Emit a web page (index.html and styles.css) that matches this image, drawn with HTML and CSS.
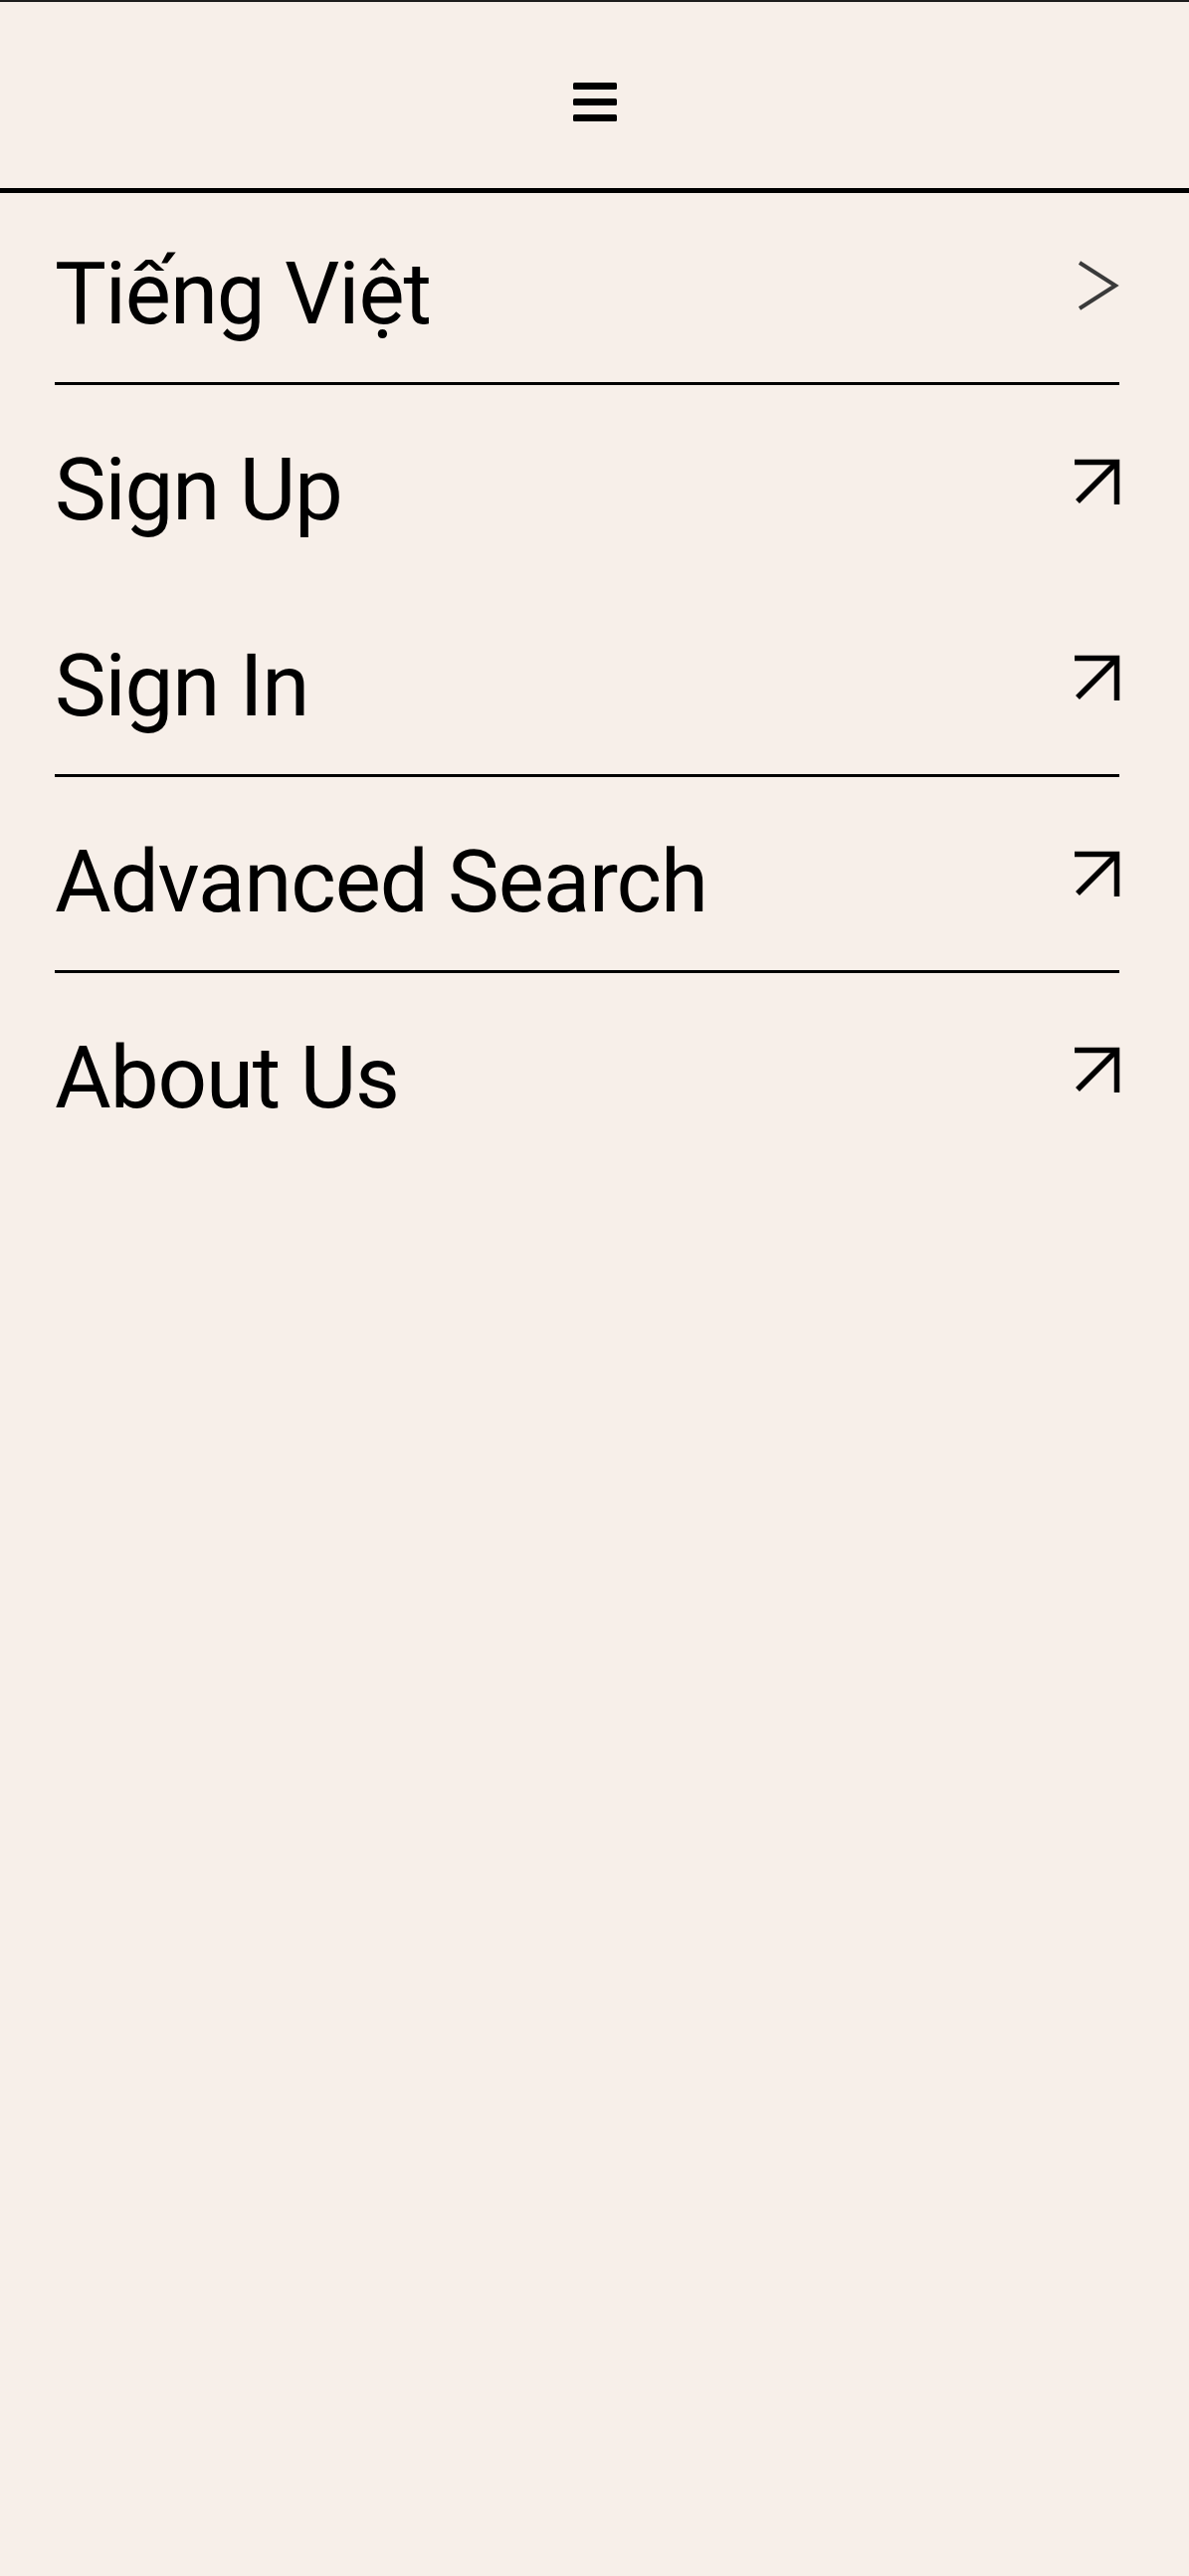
FILE: index.html
```html
<!DOCTYPE html>
<html lang="en">
<head>
<meta charset="utf-8">
<title>Menu</title>
<link rel="stylesheet" href="styles.css">
</head>
<body>
<header class="topbar">
  <button class="menu-toggle" aria-label="Close menu">
    <svg class="burger" width="44" height="39" viewBox="0 0 44 39" aria-hidden="true">
      <rect x="0" y="0" width="44" height="7" rx="1.5"/>
      <rect x="0" y="16" width="44" height="7" rx="1.5"/>
      <rect x="0" y="32" width="44" height="7" rx="1.5"/>
    </svg>
  </button>
</header>
<nav class="menu">
  <a class="item item-first item-ruled" href="#">
    <span class="label">Tiếng Việt</span>
    <svg class="chevron" width="42" height="50" viewBox="0 0 42 50" aria-hidden="true">
      <polyline points="2,2 38,25 2,48"/>
    </svg>
  </a>
  <a class="item" href="#">
    <span class="label">Sign Up</span>
    <svg class="arrow" width="45" height="45" viewBox="0 0 45 45" aria-hidden="true">
      <polyline points="0,2.5 42.5,2.5 42.5,45"/>
      <line x1="42.5" y1="2.5" x2="3" y2="42"/>
    </svg>
  </a>
  <a class="item item-ruled" href="#">
    <span class="label">Sign In</span>
    <svg class="arrow" width="45" height="45" viewBox="0 0 45 45" aria-hidden="true">
      <polyline points="0,2.5 42.5,2.5 42.5,45"/>
      <line x1="42.5" y1="2.5" x2="3" y2="42"/>
    </svg>
  </a>
  <a class="item item-ruled" href="#">
    <span class="label">Advanced Search</span>
    <svg class="arrow" width="45" height="45" viewBox="0 0 45 45" aria-hidden="true">
      <polyline points="0,2.5 42.5,2.5 42.5,45"/>
      <line x1="42.5" y1="2.5" x2="3" y2="42"/>
    </svg>
  </a>
  <a class="item" href="#">
    <span class="label">About Us</span>
    <svg class="arrow" width="45" height="45" viewBox="0 0 45 45" aria-hidden="true">
      <polyline points="0,2.5 42.5,2.5 42.5,45"/>
      <line x1="42.5" y1="2.5" x2="3" y2="42"/>
    </svg>
  </a>
</nav>
</body>
</html>
```

FILE: styles.css
```css
html, body {
  margin: 0;
  padding: 0;
  background: #f7efe9;
  min-height: 100%;
}

body {
  font-family: Roboto, "Liberation Sans", Arial, sans-serif;
  color: #000;
}

.topbar {
  box-sizing: border-box;
  height: 194px;
  border-top: 2px solid #1e1e1e;
  border-bottom: 5px solid #000;
  padding-top: 14px;
  display: flex;
  align-items: center;
  justify-content: center;
}

.menu-toggle {
  background: none;
  border: 0;
  padding: 0;
  margin: 0;
  display: flex;
  cursor: pointer;
}

.burger rect {
  fill: #000;
}

.menu {
  display: flex;
  flex-direction: column;
  padding: 0 70px 0 55px;
}

.item {
  box-sizing: border-box;
  height: 197px;
  padding-top: 62px;
  display: flex;
  justify-content: space-between;
  align-items: flex-start;
  text-decoration: none;
  color: #000;
  border-bottom: 3px solid transparent;
}

.item-ruled {
  border-bottom-color: #000;
}

.item-first {
  height: 193px;
  padding-top: 58px;
}

.label {
  font-size: 87px;
  line-height: 87px;
  font-weight: 400;
  letter-spacing: -1.1px;
  white-space: nowrap;
}

.chevron {
  margin-top: 10px;
  overflow: visible;
}

.chevron polyline {
  fill: none;
  stroke: #3a3a3a;
  stroke-width: 4;
  stroke-linejoin: miter;
}

.arrow {
  margin-top: 13px;
  overflow: visible;
}

.arrow polyline,
.arrow line {
  fill: none;
  stroke: #000;
  stroke-width: 5.5;
  stroke-linecap: butt;
  stroke-linejoin: miter;
}
```
